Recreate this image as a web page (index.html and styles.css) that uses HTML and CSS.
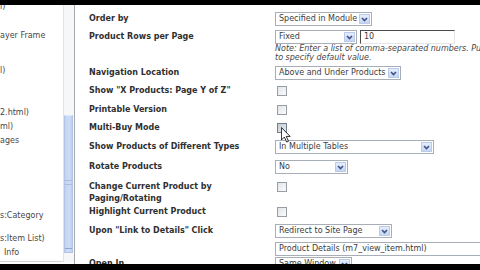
FILE: index.html
```html
<!DOCTYPE html>
<html>
<head>
<meta charset="utf-8">
<link rel="stylesheet" href="styles.css">
</head>
<body>
<div class="screen">
  <div class="bar-top"></div>
  <div class="main">
    <div class="tree">
      <div class="node first">l)</div>
      <div class="node g15">ayer Frame</div>
      <div class="node g21">l)</div>
      <div class="node g28">2.html)</div>
      <div class="node">ml)</div>
      <div class="node">ages</div>
      <div class="node g61">s:Category</div>
      <div class="node g9">s:Item List)</div>
      <div class="node ind">Info</div>
    </div>
    <div class="scroll">
      <div class="thumb"><div class="grip"></div><div class="grip-end"></div></div>
    </div>
    <div class="sep"></div>
    <div class="content">
      <div class="row">
        <div class="label">Order by</div>
        <div class="ctl"><div class="sel w97"><span class="val">Specified in Module</span><span class="btn"><svg viewBox="0 0 7 5" width="7" height="5"><path d="M1 1 L3.5 3.6 L6 1" /></svg></span></div></div>
      </div>
      <div class="row">
        <div class="label">Product Rows per Page</div>
        <div class="ctl">
          <div class="line">
            <div class="sel w82"><span class="val">Fixed</span><span class="btn"><svg viewBox="0 0 7 5" width="7" height="5"><path d="M1 1 L3.5 3.6 L6 1" /></svg></span></div>
            <div class="input">10</div>
          </div>
          <div class="note">Note: Enter a list of comma-separated numbers. Put an asterisk (*) after a number</div>
          <div class="note">to specify default value.</div>
        </div>
      </div>
      <div class="row">
        <div class="label">Navigation Location</div>
        <div class="ctl"><div class="sel w126"><span class="val">Above and Under Products</span><span class="btn"><svg viewBox="0 0 7 5" width="7" height="5"><path d="M1 1 L3.5 3.6 L6 1" /></svg></span></div></div>
      </div>
      <div class="row">
        <div class="label">Show "X Products: Page Y of Z"</div>
        <div class="ctl"><span class="chk"></span></div>
      </div>
      <div class="row m5">
        <div class="label">Printable Version</div>
        <div class="ctl"><span class="chk"></span></div>
      </div>
      <div class="row">
        <div class="label">Multi-Buy Mode</div>
        <div class="ctl">
          <span class="chk hover">
            <svg class="cursor" viewBox="0 0 12 19" width="10" height="16"><path d="M0.5 0.5 L0.5 15.5 L4 12 L6.8 18 L9 17 L6.3 11.2 L11 11.2 Z" /></svg>
          </span>
        </div>
      </div>
      <div class="row m5">
        <div class="label">Show Products of Different Types</div>
        <div class="ctl"><div class="sel w159"><span class="val">In Multiple Tables</span><span class="btn"><svg viewBox="0 0 7 5" width="7" height="5"><path d="M1 1 L3.5 3.6 L6 1" /></svg></span></div></div>
      </div>
      <div class="row m6">
        <div class="label">Rotate Products</div>
        <div class="ctl"><div class="sel w73"><span class="val">No</span><span class="btn"><svg viewBox="0 0 7 5" width="7" height="5"><path d="M1 1 L3.5 3.6 L6 1" /></svg></span></div></div>
      </div>
      <div class="row m7">
        <div class="label two">Change Current Product by<br>Paging/Rotating</div>
        <div class="ctl"><span class="chk top1"></span></div>
      </div>
      <div class="row m0">
        <div class="label">Highlight Current Product</div>
        <div class="ctl"><span class="chk"></span></div>
      </div>
      <div class="row m5">
        <div class="label">Upon "Link to Details" Click</div>
        <div class="ctl stack">
          <div class="sel w117"><span class="val">Redirect to Site Page</span><span class="btn"><svg viewBox="0 0 7 5" width="7" height="5"><path d="M1 1 L3.5 3.6 L6 1" /></svg></span></div>
          <div class="sel wwide"><span class="val">Product Details (m7_view_item.html)</span></div>
        </div>
      </div>
      <div class="row m1">
        <div class="label">Open In</div>
        <div class="ctl"><div class="sel w77"><span class="val">Same Window</span><span class="btn"><svg viewBox="0 0 7 5" width="7" height="5"><path d="M1 1 L3.5 3.6 L6 1" /></svg></span></div></div>
      </div>
    </div>
  </div>
  <div class="bar-bottom"></div>
</div>
</body>
</html>
```
FILE: styles.css
```css
html, body {
  margin: 0;
  padding: 0;
  background: #000;
  overflow: hidden;
}
.screen {
  width: 480px;
  height: 270px;
  display: flex;
  flex-direction: column;
  font-family: "DejaVu Sans", Verdana, sans-serif;
  font-size: 8px;
}
.bar-top {
  height: 5px;
  background: #000;
  flex: none;
}
.bar-bottom {
  flex: 1;
  background: #000;
}
.main {
  height: 259px;
  flex: none;
  display: flex;
  background: #fff;
  overflow: hidden;
}
.tree {
  width: 63px;
  flex: none;
  overflow: hidden;
  background: #fff;
  color: #474747;
  border-bottom: 1px solid #d6d6d6;
  height: 256px;
}
.node {
  line-height: 14px;
  height: 14px;
  white-space: nowrap;
}
.node.first { margin-top: -5px; }
.g9 { margin-top: 9px; }
.g15 { margin-top: 15px; }
.g21 { margin-top: 21px; }
.g28 { margin-top: 28px; }
.g61 { margin-top: 61px; }
.ind { padding-left: 4px; }

.scroll {
  width: 10px;
  flex: none;
  border-left: 1px solid #e4e4e4;
  background: #f6f7f9;
  height: 257px;
}
.thumb {
  margin-top: 110px;
  height: 138px;
  width: 9px;
  box-sizing: border-box;
  background: linear-gradient(90deg, #c2d2f0, #cfdcf6 60%, #bccdee);
  border: 1px solid #b3c5e6;
  border-top-color: #dfe8f8;
  display: flex;
  flex-direction: column;
  align-items: center;
}
.grip {
  margin-top: 64px;
  width: 7px;
  height: 3px;
  border-top: 1px solid #a9bde3;
  border-bottom: 1px solid #a9bde3;
}
.grip-end {
  margin-top: auto;
  width: 7px;
  height: 2px;
  border-top: 1px solid #8fa6d2;
  margin-bottom: 1px;
}
.sep {
  width: 1px;
  flex: none;
  background: #a9a9a9;
}
.content {
  flex: 1;
  overflow: hidden;
  padding: 7px 0 0 14px;
}
.row {
  display: grid;
  grid-template-columns: 186px 1fr;
  margin-top: 4px;
  align-items: start;
}
.row:first-child { margin-top: 0; }
.row.m0 { margin-top: 0; }
.row.m1 { margin-top: 1px; }
.row.m5 { margin-top: 5px; }
.row.m6 { margin-top: 6px; }
.row.m7 { margin-top: 7px; }
.label {
  font-weight: bold;
  color: #303030;
  line-height: 14px;
  white-space: nowrap;
}
.label.two { line-height: 12px; }
.ctl {
  min-width: 0;
}
.ctl.stack {
  display: flex;
  flex-direction: column;
  gap: 4px;
}
.line {
  display: flex;
}
.sel {
  display: flex;
  height: 14px;
  box-sizing: border-box;
  border: 1px solid #a7aeb7;
  background: #fff;
  flex: none;
}
.w73 { width: 73px; }
.w77 { width: 77px; }
.w82 { width: 82px; }
.w97 { width: 97px; }
.w117 { width: 117px; }
.w126 { width: 126px; }
.w159 { width: 159px; }
.wwide { width: 240px; }
.val {
  flex: 1;
  padding-left: 3px;
  line-height: 12px;
  color: #3c3c3c;
  white-space: nowrap;
  overflow: hidden;
}
.btn {
  width: 11px;
  margin: 1px;
  box-sizing: border-box;
  background: linear-gradient(#e6eefc, #c5d5f4);
  border: 1px solid #b9caea;
  display: flex;
  align-items: center;
  justify-content: center;
  flex: none;
}
.btn path {
  fill: none;
  stroke: #3f5282;
  stroke-width: 1.6;
}
.input {
  margin-left: 3px;
  width: 95px;
  height: 14px;
  box-sizing: border-box;
  border-top: 1px solid #4a4a4a;
  border-left: 1px solid #4a4a4a;
  border-right: 1px solid #e6e6e6;
  border-bottom: 1px solid #e6e6e6;
  padding-left: 3px;
  line-height: 12px;
  color: #3c3c3c;
  flex: none;
}
.note {
  font-style: italic;
  font-size: 8px;
  line-height: 9px;
  color: #474747;
  white-space: nowrap;
}
.chk {
  display: block;
  position: relative;
  width: 10px;
  height: 10px;
  box-sizing: border-box;
  margin: 2px 0 0 2px;
  border: 1px solid #979ea6;
  background: linear-gradient(135deg, #e2e4e6, #fbfbfb);
}
.chk.top1 { margin-top: 1px; }
.chk.hover {
  border-color: #6f7e8f;
  background: linear-gradient(135deg, #c9ccd0, #e8eaec);
}
.cursor {
  position: absolute;
  left: 3px;
  top: 3px;
}
.cursor path {
  fill: #fff;
  stroke: #000;
  stroke-width: 1;
}
```
